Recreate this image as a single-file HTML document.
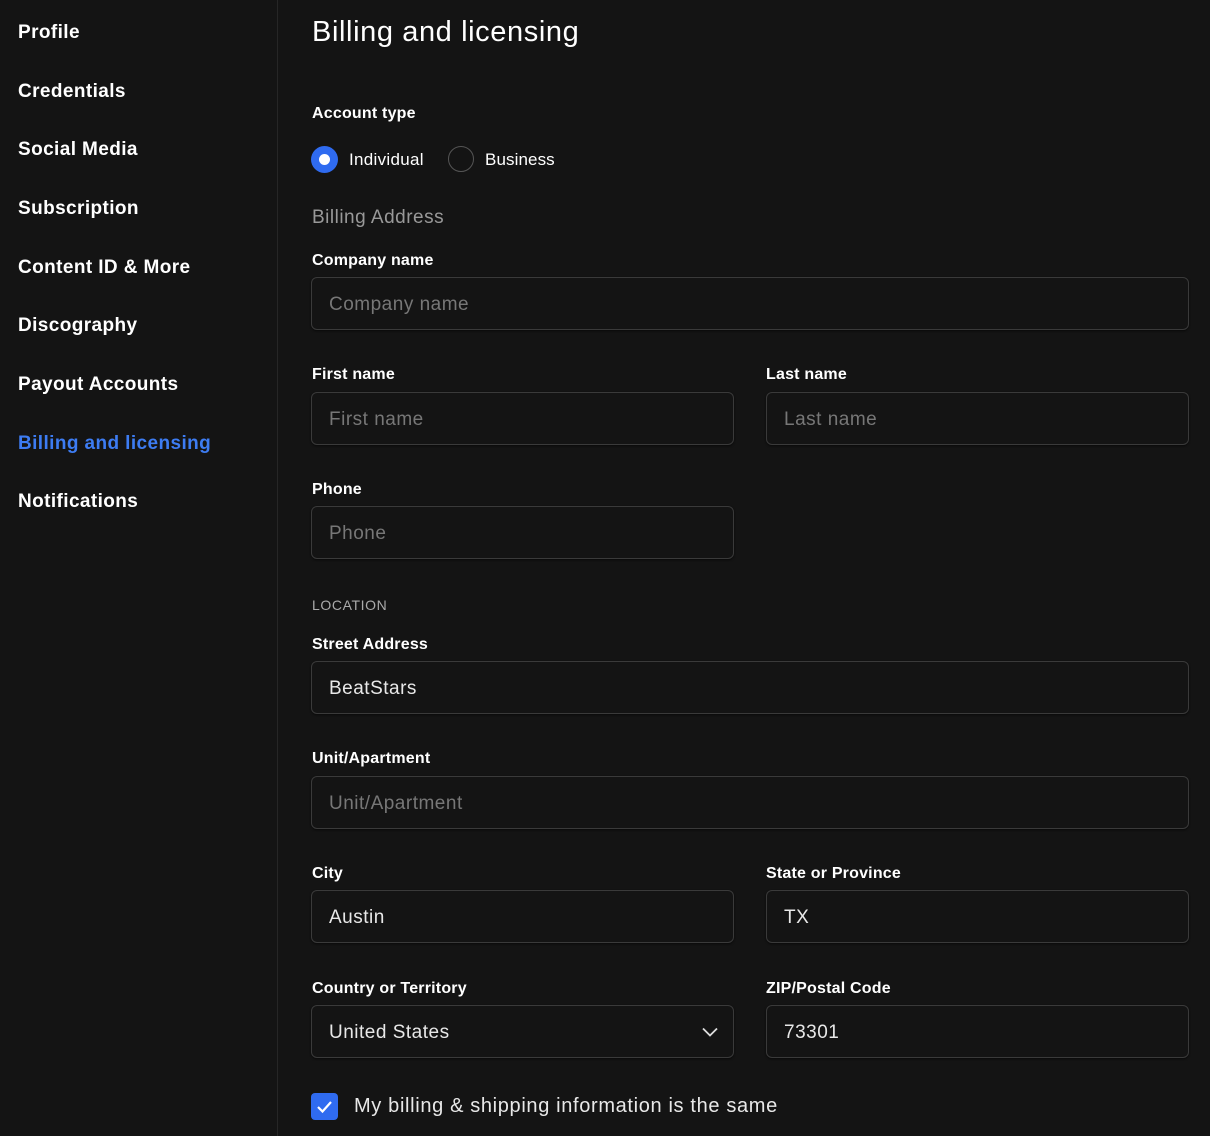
<!DOCTYPE html>
<html><head><style>
*{box-sizing:border-box;margin:0;padding:0}
body{width:1210px;height:1136px;background:#141414;color:#fff;font-family:"Liberation Sans",sans-serif;position:relative;overflow:hidden}
.side{position:absolute;left:0;top:0;width:278px;height:1136px;border-right:1px solid #262626}
.side div{position:absolute;left:18px;font-size:19px;font-weight:bold;letter-spacing:0.4px;transform:translateY(-50%);margin-top:2px}
.a{position:absolute}
.lbl{position:absolute;left:312px;font-size:16px;font-weight:bold;transform:translateY(-50%);letter-spacing:0.2px;margin-top:2px}
.in{position:absolute;height:53px;border:1px solid #3a3a3a;border-radius:6px;background:#141414;font-size:19px;padding-left:17px;line-height:53px;color:#e8e8e8;letter-spacing:0.5px;box-shadow:0 1px 2px rgba(0,0,0,.6)}
.ph{color:#777}
.full{left:311px;width:878px}.l{left:311px;width:423px}.r{left:766px;width:423px}
</style></head><body>
<div class="side">
<div style="top:31px">Profile</div>
<div style="top:90px">Credentials</div>
<div style="top:148px">Social Media</div>
<div style="top:207px">Subscription</div>
<div style="top:266px">Content ID &amp; More</div>
<div style="top:324px">Discography</div>
<div style="top:383px">Payout Accounts</div>
<div style="top:442px;color:#3d7cf2">Billing and licensing</div>
<div style="top:500px">Notifications</div>
</div>
<div class="a" style="left:312px;top:16px;font-size:29px;letter-spacing:0.6px">Billing and licensing</div>
<div class="lbl" style="top:112px">Account type</div>
<div class="a" style="left:311px;top:146px;width:27px;height:27px;border-radius:50%;background:#2f6bf0"><div style="position:absolute;left:8px;top:8px;width:11px;height:11px;border-radius:50%;background:#fff"></div></div>
<div class="a" style="left:349px;top:150px;font-size:17px;letter-spacing:0.3px">Individual</div>
<div class="a" style="left:448px;top:146px;width:26px;height:26px;border-radius:50%;border:1px solid #555"></div>
<div class="a" style="left:485px;top:150px;font-size:17px;letter-spacing:0.1px">Business</div>
<div class="a" style="left:312px;top:207px;font-size:19px;color:#999;letter-spacing:0.5px">Billing Address</div>
<div class="lbl" style="top:259px">Company name</div>
<div class="in full ph" style="top:277px">Company name</div>
<div class="lbl" style="top:373px">First name</div>
<div class="lbl" style="top:373px;left:766px">Last name</div>
<div class="in l ph" style="top:392px">First name</div>
<div class="in r ph" style="top:392px">Last name</div>
<div class="lbl" style="top:488px">Phone</div>
<div class="in l ph" style="top:506px">Phone</div>
<div class="a" style="left:312px;top:597px;font-size:14px;color:#aaa;letter-spacing:0.6px">LOCATION</div>
<div class="lbl" style="top:643px">Street Address</div>
<div class="in full" style="top:661px">BeatStars</div>
<div class="lbl" style="top:757px">Unit/Apartment</div>
<div class="in full ph" style="top:776px">Unit/Apartment</div>
<div class="lbl" style="top:872px">City</div>
<div class="lbl" style="top:872px;left:766px">State or Province</div>
<div class="in l" style="top:890px">Austin</div>
<div class="in r" style="top:890px">TX</div>
<div class="lbl" style="top:987px">Country or Territory</div>
<div class="lbl" style="top:987px;left:766px">ZIP/Postal Code</div>
<div class="in l" style="top:1005px">United States
<svg style="position:absolute;right:15px;top:21px" width="16" height="10" viewBox="0 0 16 10"><path d="M1 1.5L8 8.5L15 1.5" fill="none" stroke="#ddd" stroke-width="1.8"/></svg></div>
<div class="in r" style="top:1005px">73301</div>
<div class="a" style="left:311px;top:1093px;width:27px;height:27px;border-radius:4px;background:#2f6bf0">
<svg width="27" height="27" viewBox="0 0 27 27"><path d="M7 14L11.5 18.5L20 9" fill="none" stroke="#fff" stroke-width="2.2"/></svg></div>
<div class="a" style="left:354px;top:1095px;font-size:20px;color:#e8e8e8;letter-spacing:0.65px">My billing &amp; shipping information is the same</div>
</body></html>
